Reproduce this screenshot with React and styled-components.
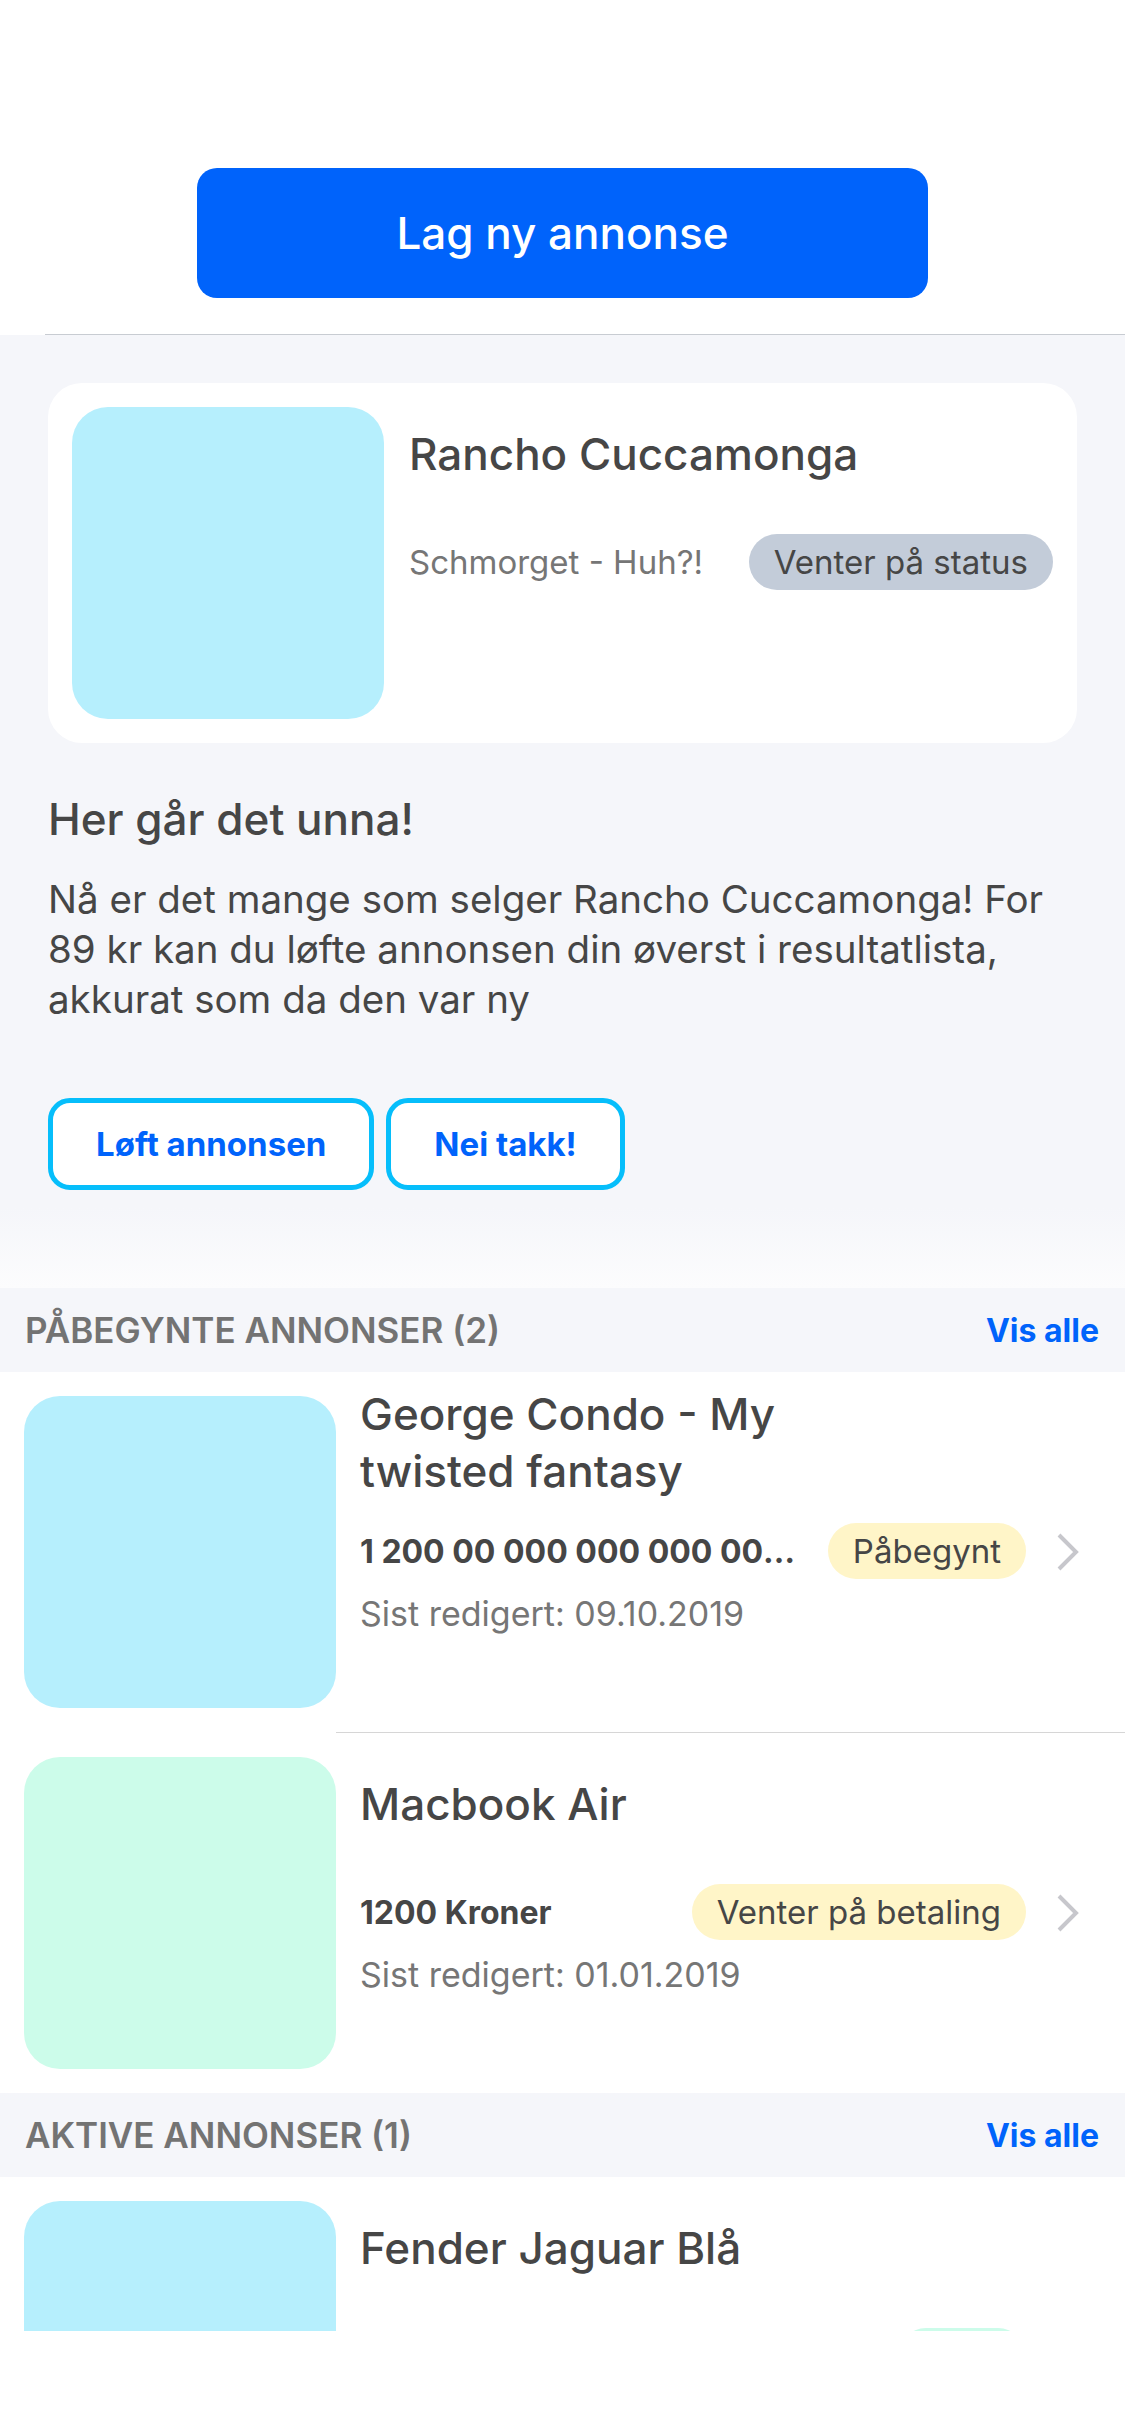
import React from 'react';
import styled, { createGlobalStyle } from 'styled-components';

const GlobalStyle = createGlobalStyle`
  * {
    box-sizing: border-box;
  }

  body {
    margin: 0;
    background: #ffffff;
    font-family: Inter, 'Noto Sans', 'Liberation Sans', sans-serif;
    color: #464646;
  }
`;

const colors = {
  blue: '#0063fb',
  cyan: '#06befb',
  text: '#464646',
  muted: '#767676',
  wash: '#f5f6fa',
  sky: '#b6effd',
  mint: '#ccfcea',
  slate: '#c3ccd9',
  butter: '#fff5c8',
};

const Screen = styled.div`
  width: 1125px;
  height: 2436px;
  display: flex;
  flex-direction: column;
  background: #ffffff;
  overflow: hidden;
`;

const Scroll = styled.main`
  flex: 1;
  min-height: 0;
  overflow: hidden;
`;

const TabSpace = styled.div`
  height: 105px;
  flex-shrink: 0;
  background: #ffffff;
`;

const TopBar = styled.header`
  display: flex;
  justify-content: center;
  padding: 168px 0 36px;
  background: #ffffff;
`;

const PrimaryButton = styled.button`
  width: 731px;
  height: 130px;
  border: none;
  border-radius: 20px;
  background: ${colors.blue};
  color: #ffffff;
  font-family: inherit;
  font-size: 44px;
  font-weight: 500;
`;

const Rule = styled.div`
  height: 1px;
  margin-left: ${({ inset }) => inset}px;
  background: ${({ tone }) => tone || '#c8ccd2'};
`;

const Promo = styled.section`
  padding: 48px 48px 98px;
  background: linear-gradient(
    180deg,
    ${colors.wash} 0,
    ${colors.wash} calc(100% - 80px),
    #fcfcfd 100%
  );
`;

const Card = styled.div`
  display: flex;
  gap: 25px;
  padding: 24px;
  border-radius: 34px;
  background: #ffffff;
`;

const Thumb = styled.div`
  width: 312px;
  height: 312px;
  flex-shrink: 0;
  border-radius: 36px;
  background: ${({ tone }) => colors[tone]};
`;

const AdBody = styled.div`
  flex: 1;
  min-width: 0;
  align-self: flex-start;
  display: flex;
  flex-direction: column;
`;

// title is centred in a fixed box, two-line titles spill over evenly
const TitleBox = styled.div`
  height: 94px;
  display: flex;
  align-items: center;
`;

const Title = styled.h3`
  margin: 0;
  max-width: ${({ narrow }) => (narrow ? '540px' : 'none')};
  font-size: 44px;
  line-height: 57px;
  font-weight: 500;
  color: ${colors.text};
`;

const MetaRow = styled.div`
  height: 56px;
  margin-top: 33px;
  display: flex;
  align-items: center;
  justify-content: space-between;
  gap: 28px;
`;

const Meta = styled.span`
  font-size: 33px;
  color: ${colors.muted};
  white-space: nowrap;
`;

const Badge = styled.span`
  height: 56px;
  display: inline-flex;
  align-items: center;
  flex-shrink: 0;
  padding: 0 25px;
  border-radius: 28px;
  background: ${({ tone }) => colors[tone]};
  font-size: 33px;
  color: ${colors.text};
  white-space: nowrap;
`;

const Price = styled.span`
  flex: 1;
  min-width: 0;
  overflow: hidden;
  text-overflow: ellipsis;
  white-space: nowrap;
  font-size: 32px;
  font-weight: 700;
  color: ${colors.text};
`;

const Edited = styled.p`
  margin: 13px 0 0;
  font-size: 34px;
  line-height: 44px;
  color: ${colors.muted};
`;

const PromoHeading = styled.h2`
  margin: 50px 0 0;
  font-size: 44px;
  line-height: 52px;
  font-weight: 500;
  color: ${colors.text};
`;

const PromoText = styled.p`
  margin: 29px 0 0;
  font-size: 38.5px;
  line-height: 50px;
  color: ${colors.text};
`;

const Actions = styled.div`
  display: flex;
  gap: 12px;
  margin-top: 74px;
`;

const OutlineButton = styled.button`
  height: 92px;
  padding: 0 43px;
  border: 5px solid ${colors.cyan};
  border-radius: 22px;
  background: #ffffff;
  color: ${colors.blue};
  font-family: inherit;
  font-size: 33px;
  font-weight: 700;
`;

const SectionHeader = styled.div`
  height: 84px;
  display: flex;
  align-items: center;
  justify-content: space-between;
  padding: 0 26px 0 25px;
  background: ${colors.wash};
`;

const SectionLabel = styled.span`
  font-size: 35px;
  font-weight: 600;
  text-transform: uppercase;
  color: #737373;
`;

const ViewAll = styled.a`
  font-size: 32px;
  font-weight: 700;
  color: ${colors.blue};
  text-decoration: none;
`;

const AdRow = styled.div`
  display: flex;
  align-items: center;
  gap: 24px;
  padding: 24px 46px 24px 24px;
  background: #ffffff;
`;

const Chevron = styled.svg`
  flex-shrink: 0;
  margin-left: 7px;
`;

const ChevronIcon = () => (
  <Chevron width="22" height="38" viewBox="0 0 22 38">
    <path d="M2 2 L19 19 L2 36" fill="none" stroke="#c7c7cc" strokeWidth="4" />
  </Chevron>
);

const drafts = [
  {
    id: 'condo',
    title: 'George Condo - My twisted fantasy',
    price: '1 200 00 000 000 000 000 000 kr',
    status: 'Påbegynt',
    statusTone: 'butter',
    edited: '09.10.2019',
    tone: 'sky',
  },
  {
    id: 'macbook',
    title: 'Macbook Air',
    price: '1200 Kroner',
    status: 'Venter på betaling',
    statusTone: 'butter',
    edited: '01.01.2019',
    tone: 'mint',
  },
];

const active = [
  {
    id: 'fender',
    title: 'Fender Jaguar Blå',
    price: '8500 Kroner',
    status: 'Aktiv',
    statusTone: 'mint',
    edited: '12.09.2019',
    tone: 'sky',
  },
];

const AdItem = ({ ad }) => (
  <AdRow>
    <Thumb tone={ad.tone} />
    <AdBody>
      <TitleBox>
        <Title narrow>{ad.title}</Title>
      </TitleBox>
      <MetaRow>
        <Price>{ad.price}</Price>
        <Badge tone={ad.statusTone}>{ad.status}</Badge>
      </MetaRow>
      <Edited>Sist redigert: {ad.edited}</Edited>
    </AdBody>
    <ChevronIcon />
  </AdRow>
);

const AdList = ({ label, ads }) => (
  <section>
    <SectionHeader>
      <SectionLabel>
        {label} ({ads.length})
      </SectionLabel>
      <ViewAll href="#">Vis alle</ViewAll>
    </SectionHeader>
    {ads.map((ad, i) => (
      <React.Fragment key={ad.id}>
        {i > 0 && <Rule inset={336} tone="#d6d6d6" />}
        <AdItem ad={ad} />
      </React.Fragment>
    ))}
  </section>
);

const App = () => (
  <>
    <GlobalStyle />
    <Screen>
      <Scroll>
        <TopBar>
          <PrimaryButton>Lag ny annonse</PrimaryButton>
        </TopBar>
        <Rule inset={45} />
        <Promo>
          <Card>
            <Thumb tone="sky" />
            <AdBody>
              <TitleBox>
                <Title>Rancho Cuccamonga</Title>
              </TitleBox>
              <MetaRow>
                <Meta>Schmorget - Huh?!</Meta>
                <Badge tone="slate">Venter på status</Badge>
              </MetaRow>
            </AdBody>
          </Card>
          <PromoHeading>Her går det unna!</PromoHeading>
          <PromoText>
            Nå er det mange som selger Rancho Cuccamonga! For 89 kr kan du løfte annonsen din
            øverst i resultatlista, akkurat som da den var ny
          </PromoText>
          <Actions>
            <OutlineButton>Løft annonsen</OutlineButton>
            <OutlineButton>Nei takk!</OutlineButton>
          </Actions>
        </Promo>
        <AdList label="Påbegynte annonser" ads={drafts} />
        <AdList label="Aktive annonser" ads={active} />
      </Scroll>
      <TabSpace />
    </Screen>
  </>
);

export default App;
